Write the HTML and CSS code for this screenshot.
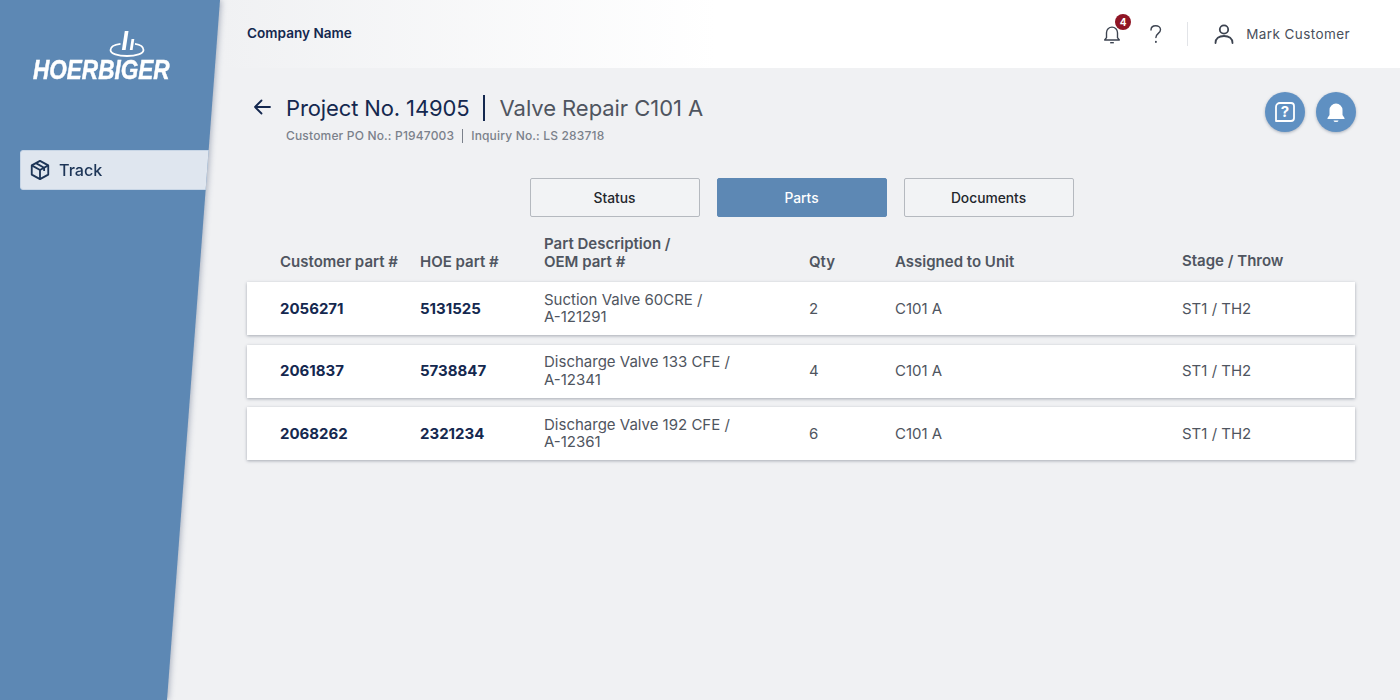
FILE: index.html
```html
<!DOCTYPE html>
<html lang="en">
<head>
<meta charset="utf-8">
<title>Parts</title>
<link rel="stylesheet" href="styles.css">
</head>
<body>
<div class="app">
  <aside class="side">
    <div class="side-fill">
      <div class="logo">
        <svg class="logo-mark" viewBox="0 0 36 28" width="36" height="28"><path d="M15.800 1h3.700l-2.900 19h-3.700z" fill="#fff"/><path d="M22.500 9h2.800l-1.700 11h-2.800z" fill="#fff"/><path d="M11.500 13.800C5.500 14.500 1.500 16.800 1.500 20 1.500 23.600 9 26 18 26S34.500 23.600 34.500 20C34.500 16.800 31 14.500 26 13.800" fill="none" stroke="#fff" stroke-width="1.800"/></svg>
        <div class="logo-text">HOERBIGER</div>
      </div>
      <div class="nav-item">
        <svg viewBox="0 0 24 24" width="22" height="22" fill="none" stroke="#1d3557" stroke-width="2" stroke-linejoin="round"><path d="M12 2l9 5v10l-9 5-9-5V7z"/><path d="M3 7l9 5 9-5M12 12v10M7.500 4.500l9 5v3.500"/></svg>
        <span>Track</span>
      </div>
    </div>
  </aside>
  <main class="main">
    <header class="top">
      <div class="company">Company Name</div>
      <div class="top-right">
        <div class="bell">
          <svg viewBox="0 0 24 24" width="22" height="22" fill="none" stroke="#3c4350" stroke-width="1.500" stroke-linejoin="round"><path d="M6 16V10.500a6 6 0 0 1 12 0V16l2 2.500H4z"/><path d="M10 21.500h4"/></svg>
          <span class="badge">4</span>
        </div>
        <svg class="help" viewBox="0 0 14 20" width="14" height="20" fill="none" stroke="#3c4350" stroke-width="1.400" stroke-linecap="round"><path d="M2 6c0-2.700 2.100-4.200 4.700-4.200S11.500 3.400 11.500 5.800c0 3.500-4.600 3.700-4.600 7.700"/><path d="M6.900 17.600v.4" stroke-width="1.800"/></svg>
        <div class="divider"></div>
        <svg class="user" viewBox="0 0 24 24" width="24" height="24" fill="none" stroke="#3c4350" stroke-width="1.800" stroke-linecap="round"><circle cx="12" cy="7.500" r="4.200"/><path d="M3.500 21c0-4.500 3.500-7 8.500-7s8.500 2.500 8.500 7"/></svg>
        <div class="uname">Mark Customer</div>
      </div>
    </header>
    <div class="content">
      <div class="head">
        <div class="head-left">
          <svg class="back" viewBox="0 0 20 20" width="20" height="20" fill="none" stroke="#14284f" stroke-width="1.800" stroke-linecap="round" stroke-linejoin="round"><path d="M18 10H3M9.500 3.500L3 10l6.500 6.500"/></svg>
          <div>
            <div class="title"><span class="pno">Project No. 14905</span><span class="bar"></span><span class="pname">Valve Repair C101 A</span></div>
            <div class="sub"><span>Customer PO No.: P1947003</span><span class="subbar"></span><span>Inquiry No.: LS 283718</span></div>
          </div>
        </div>
        <div class="fabs">
          <div class="fab"><svg viewBox="0 0 24 24" width="24" height="24" fill="none" stroke="#fff" stroke-width="1.800" stroke-linejoin="round"><path d="M7 3h11a3 3 0 0 1 3 3v12a3 3 0 0 1-3 3H3V7a4 4 0 0 1 4-4z"/></svg><span class="fabq">?</span></div>
          <div class="fab"><svg viewBox="0 0 24 24" width="24" height="24" fill="#fff"><path d="M12 3.500a6.500 6.500 0 0 0-6.500 6.500v5L3.500 18v1h17v-1l-2-3v-5A6.500 6.500 0 0 0 12 3.500z"/><path d="M9.500 20.500h5a2.500 1.500 0 0 1-5 0z"/></svg></div>
        </div>
      </div>
      <div class="tabs">
        <div class="tab">Status</div>
        <div class="tab active">Parts</div>
        <div class="tab">Documents</div>
      </div>
      <div class="grid thead">
        <div>Customer part #</div>
        <div>HOE part #</div>
        <div>Part Description /<br>OEM part #</div>
        <div>Qty</div>
        <div>Assigned to Unit</div>
        <div class="stage">Stage / Throw</div>
      </div>
      <div class="grid row">
        <div class="num">2056271</div><div class="num">5131525</div>
        <div class="desc">Suction Valve 60CRE /<br>A-121291</div>
        <div>2</div><div>C101 A</div><div>ST1 / TH2</div>
      </div>
      <div class="grid row">
        <div class="num">2061837</div><div class="num">5738847</div>
        <div class="desc">Discharge Valve 133 CFE /<br>A-12341</div>
        <div>4</div><div>C101 A</div><div>ST1 / TH2</div>
      </div>
      <div class="grid row">
        <div class="num">2068262</div><div class="num">2321234</div>
        <div class="desc">Discharge Valve 192 CFE /<br>A-12361</div>
        <div>6</div><div>C101 A</div><div>ST1 / TH2</div>
      </div>
    </div>
  </main>
</div>
</body>
</html>
```
FILE: styles.css
```css
* { box-sizing: border-box; }
html, body { margin: 0; height: 100%; }
body { font-family: Inter, "Liberation Sans", sans-serif; background: #f0f1f3; color: #4a505b; overflow: hidden; }
.app { display: flex; height: 700px; width: 1400px; }
.side { width: 220px; flex: none; height: 700px; filter: drop-shadow(1px 0 3px rgba(20,40,80,.35)); position: relative; z-index: 2; }
.side-fill { height: 100%; background: #5d88b4; clip-path: polygon(0 0, 100% 0, 167px 100%, 0 100%); padding-top: 30px; }
.logo { display: flex; flex-direction: column; align-items: center; width: 203px; }
.logo-mark { align-self: flex-start; margin-left: 109px; margin-bottom: 1px; display: block; }
.logo-text { font-family: "Liberation Sans", sans-serif; font-weight: 700; font-style: italic; font-size: 27.500px; line-height: 22px; color: #fff; -webkit-text-stroke: .5px #fff; transform: scaleX(.82); }
.nav-item { margin: 69px 0 0 20px; height: 40px; background: #dfe6ef; border-radius: 3px 0 0 3px; display: flex; align-items: center; gap: 8px; padding-left: 8px; color: #1d3557; font-size: 16.200px; font-weight: 500; border: 1px solid #c8d6e6; }
.main { flex: 1; min-width: 0; }
.top { height: 68px; background: linear-gradient(90deg, #f0f1f3 0, #fff 42%); display: flex; align-items: center; justify-content: space-between; padding: 0 50px 0 27px; }
.company { font-size: 13.600px; font-weight: 600; color: #14284f; margin-top: -2px; }
.top-right { display: flex; align-items: center; }
.bell { position: relative; width: 22px; height: 22px; }
.badge { position: absolute; left: 14px; top: -9px; width: 16px; height: 16px; border-radius: 50%; background: #8f1525; color: #fff; font-size: 10px; font-weight: 700; line-height: 16px; text-align: center; }
.help { margin-left: 26px; display: block; }
.divider { width: 1px; height: 24px; background: #e2e4e8; margin: 0 24px; }
.user { display: block; }
.uname { margin-left: 10px; font-size: 13.500px; color: #4a505b; letter-spacing: .42px; }
.content { padding: 0 45px 0 27px; }
.head { display: flex; justify-content: space-between; height: 110px; padding-top: 24px; }
.head-left { display: flex; gap: 14px; }
.back { margin: 5px 0 0 5px; }
.title { display: flex; align-items: center; height: 32px; font-size: 22px; }
.pno { color: #14284f; font-weight: 400; letter-spacing: -.12px; }
.bar { width: 2px; height: 26px; background: #14284f; margin: 0 15px 0 13px; }
.pname { color: #4f5560; letter-spacing: -.05px; }
.sub { display: flex; align-items: center; font-size: 12px; font-weight: 500; color: #7b818b; margin-top: 4px; letter-spacing: .17px; }
.subbar { width: 1px; height: 14px; background: #7b818b; margin: 0 8px; }
.fabs { display: flex; gap: 11px; margin-right: -1px; }
.fab { position: relative; width: 40px; height: 40px; border-radius: 50%; background: #5f90c2; display: flex; align-items: center; justify-content: center; box-shadow: 0 1px 3px rgba(40,60,90,.35); }
.fabq { position: absolute; inset: 0; text-align: center; line-height: 40px; color: #fff; font-size: 15px; font-weight: 700; }
.tabs { display: flex; justify-content: center; gap: 17px; padding-left: 1px; }
.tab { width: 170px; height: 39px; border: 1px solid #b5b9bf; border-radius: 2px; background: #f2f3f5; display: flex; align-items: center; justify-content: center; font-size: 13.800px; font-weight: 500; color: #23262c; }
.tab.active { background: #5d88b4; border-color: #5d88b4; color: #fff; }
.grid { display: grid; grid-template-columns: 140px 124px 265px 86px 287px 1fr; padding-left: 33px; }
.thead { height: 65px; align-items: end; padding-bottom: 11px; font-size: 15px; line-height: 18px; font-weight: 600; color: #4f5560; }
.stage { margin-bottom: 1px; }
.row { height: 53px; margin-bottom: 9.500px; padding-bottom: 1px; background: #fff; align-items: center; font-size: 15px; color: #4f5560; box-shadow: 0 1px 3px rgba(30,40,60,.35); }
.num { font-weight: 700; color: #14284f; }
.desc { line-height: 17.500px; }
```
